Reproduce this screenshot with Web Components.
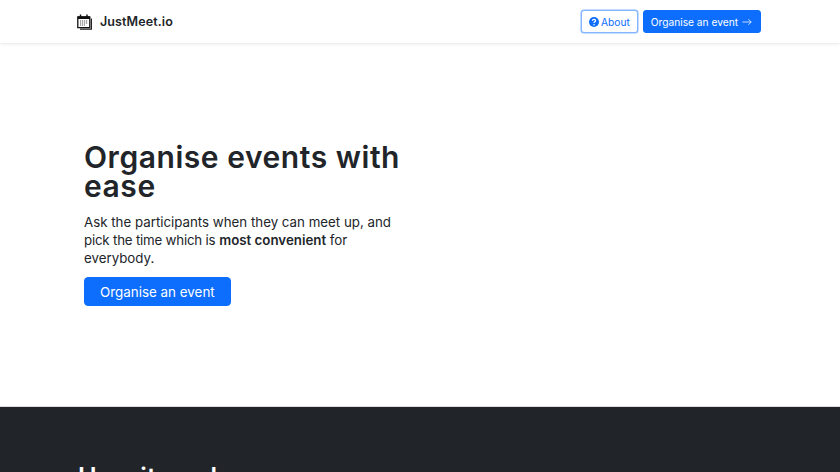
<!DOCTYPE html>
<html lang="en"><head><meta charset="utf-8"><title>JustMeet.io</title>
<style>
html,body{margin:0;padding:0;height:472px;overflow:hidden;background:#fff}
body{font-family:Inter,"Liberation Sans",sans-serif;color:#212529}
</style></head><body>
<template id="t-btn"><style>
:host{display:inline-flex;box-sizing:border-box;align-items:center;justify-content:center;border-radius:3px;background:#0d6efd;color:#fff;border:1px solid #0d6efd;font-size:10.2px;height:23px;padding:0 7px;white-space:nowrap;gap:2px}
:host([variant=outline]){background:#fff;color:#0d6efd;border-color:#86b7fe;box-shadow:0 0 0 .5px #86b7fe}
:host([size=lg]){font-size:13.4px;height:29px;padding:0 15px;border-radius:4px}
</style><slot></slot></template>
<template id="t-nav"><style>
:host{display:flex;align-items:center;justify-content:space-between;height:43px;box-sizing:border-box;padding:0 79px 0 77px;background:#fff;box-shadow:0 1px 3px rgba(0,0,0,.1);position:relative}
.brand{display:flex;align-items:center;gap:8px;font-weight:600;font-size:12.5px;color:#212529;letter-spacing:.1px}
.acts{display:flex;gap:5px}
svg{display:block}
</style>
<div class="brand"><svg width="15" height="16" viewBox="0 0 15 16"><path d="M.8 2.8h12v10.8H.8z" fill="#fff" stroke="#111" stroke-width="1.3"/><path d="M.8 2.4h12v2.6H.8z" fill="#111"/><path d="M3.5 .6v3M10 .6v3" stroke="#111" stroke-width="1.4"/><path d="M3 7h7.6M3 9h7.6M3 11h5" stroke="#555" stroke-width="1.1" stroke-dasharray="1.2 .8"/><path d="M14.4 4.5v10.7H3" fill="none" stroke="#222" stroke-width="1.2"/></svg><span>JustMeet.io</span></div>
<div class="acts"><x-btn variant="outline"><svg width="10" height="10" viewBox="0 0 16 16"><path fill="#0d6efd" d="M16 8A8 8 0 1 1 0 8a8 8 0 0 1 16 0z"/><path fill="none" stroke="#fff" stroke-width="2" d="M5.4 6.1c0-1.6 1.2-2.4 2.6-2.4s2.6.8 2.6 2.2c0 1.8-2.6 1.9-2.6 3.7"/><circle cx="8" cy="12.2" r="1.2" fill="#fff"/></svg>About</x-btn><x-btn>Organise an event <svg width="13" height="10" viewBox="0 0 19 16"><path fill="none" stroke="#fff" stroke-width="1.2" d="M3 8h14M12.5 3.5 17 8l-4.5 4.5"/></svg></x-btn></div>
</template>
<template id="t-hero"><style>
:host{display:flex;flex-direction:column;align-items:flex-start;justify-content:center;box-sizing:border-box;height:363px;padding:0 0 0 84px}
h1{margin:0 0 12px;font-size:30px;line-height:29px;font-weight:600;width:330px;letter-spacing:.55px}
p{margin:0 0 10px;font-size:13.3px;line-height:18px;width:320px;font-weight:400;color:#212529}
</style><h1><slot name="title"></slot></h1><p><slot></slot></p><x-btn size="lg"><slot name="cta"></slot></x-btn></template>
<template id="t-dark"><style>
:host{display:block;background:#212529;color:#fff;height:66px;overflow:hidden;border-top:1px solid #ddd;box-sizing:border-box;padding:55px 0 0 78px}
h2{margin:0;font-size:25px;line-height:31px;font-weight:600;letter-spacing:.4px}
</style><h2><slot></slot></h2></template>
<x-nav></x-nav>
<x-hero><span slot="title">Organise events with ease</span>Ask the participants when they can meet up, and <span style="letter-spacing:-.2px">pick the time which is</span> <b style="font-weight:600">most convenient</b> for everybody.<span slot="cta">Organise an event</span></x-hero>
<x-dark>How it works</x-dark>
<script>
for(const [n,t] of [['x-btn','t-btn'],['x-nav','t-nav'],['x-hero','t-hero'],['x-dark','t-dark']]){
customElements.define(n,class extends HTMLElement{constructor(){super();this.attachShadow({mode:'open'}).appendChild(document.getElementById(t).content.cloneNode(true));}});
}
</script>
</body></html>
